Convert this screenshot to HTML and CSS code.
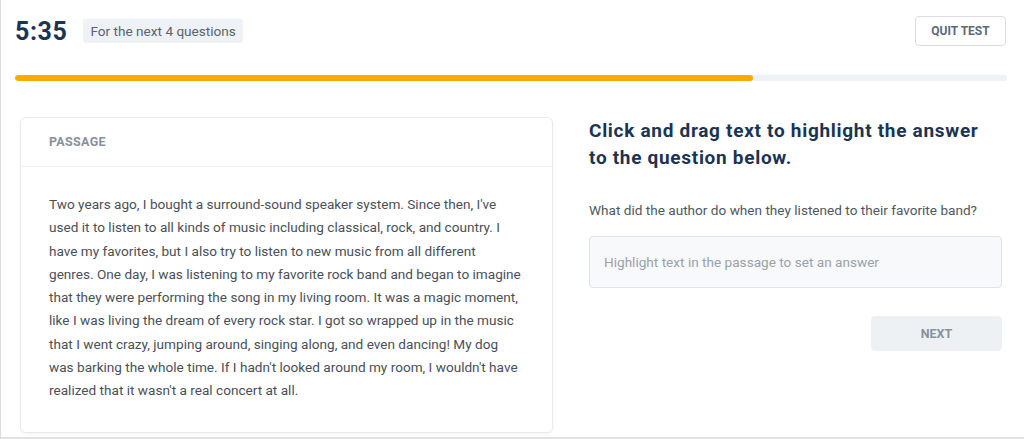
FILE: index.html
```html
<!DOCTYPE html>
<html>
<head>
<meta charset="utf-8">
<link rel="stylesheet" href="styles.css">
</head>
<body>
<div class="frame">
  <header class="topbar">
    <div class="timer-group">
      <span class="timer">5:35</span>
      <span class="badge">For the next 4 questions</span>
    </div>
    <button class="quit">QUIT TEST</button>
  </header>
  <div class="progress"><div class="progress-fill" style="width:74.4%"></div></div>
  <main class="content">
    <section class="card">
      <div class="card-head">PASSAGE</div>
      <div class="card-body">
        <p class="passage">Two years ago, I bought a surround-sound speaker system. Since then, I've<br>
used it to listen to all kinds of music including classical, rock, and country. I<br>
have my favorites, but I also try to listen to new music from all different<br>
genres. One day, I was listening to my favorite rock band and began to imagine<br>
that they were performing the song in my living room. It was a magic moment,<br>
like I was living the dream of every rock star. I got so wrapped up in the music<br>
that I went crazy, jumping around, singing along, and even dancing! My dog<br>
was barking the whole time. If I hadn't looked around my room, I wouldn't have<br>
realized that it wasn't a real concert at all.</p>
      </div>
    </section>
    <section class="question">
      <h1 class="prompt">Click and drag text to highlight the answer to the question below.</h1>
      <p class="qtext">What did the author do when they listened to their favorite band?</p>
      <div class="answer">Highlight text in the passage to set an answer</div>
      <div class="actions"><button class="next">NEXT</button></div>
    </section>
  </main>
</div>
</body>
</html>
```
FILE: styles.css
```css
html, body {
  margin: 0;
  padding: 0;
  background: #fff;
}
body {
  font-family: Roboto, "Noto Sans", sans-serif;
  color: #4a5058;
  width: 1024px;
  height: 439px;
  overflow: hidden;
}
.frame {
  box-sizing: border-box;
  height: 439px;
  border-left: 1px solid #dcdcdc;
  border-bottom: 2px solid #e2e2e2;
  padding: 0 17px 0 14px;
}
.topbar {
  display: flex;
  justify-content: space-between;
  align-items: center;
  padding-top: 16px;
  height: 30px;
}
.timer-group {
  display: flex;
  align-items: center;
  gap: 16px;
}
.timer {
  font-size: 25px;
  font-weight: 700;
  color: #1a3452;
  letter-spacing: 0.6px;
}
.badge {
  background: #eef2f6;
  border-radius: 3px;
  font-size: 13.6px;
  color: #5a636d;
  padding: 0 7px;
  height: 24px;
  line-height: 24px;
}
.quit {
  font-family: inherit;
  background: #fff;
  border: 1px solid #d9dde2;
  border-radius: 4px;
  font-size: 12px;
  font-weight: 700;
  color: #5d6a78;
  width: 91px;
  height: 30px;
  padding: 0;
  margin-right: 1px;
}
.progress {
  margin-top: 29px;
  height: 6px;
  border-radius: 3px;
  background: #eef1f5;
  overflow: hidden;
}
.progress-fill {
  height: 100%;
  background: #ffa800;
  border-radius: 3px;
}
.content {
  display: flex;
  gap: 36px;
  padding: 36px 5px 0 5px;
}
.card {
  width: 533px;
  box-sizing: border-box;
  border: 1px solid #e8eaed;
  border-radius: 6px;
  box-shadow: 0 1px 3px rgba(0,0,0,0.06);
  height: 316px;
}
.card-head {
  height: 48px;
  line-height: 48px;
  padding-left: 28px;
  border-bottom: 1px solid #eceef0;
  font-size: 12.5px;
  font-weight: 700;
  color: #88919a;
  letter-spacing: 0.3px;
}
.card-body {
  padding: 26px 10px 0 28px;
}
.passage {
  margin: 0;
  font-size: 13.6px;
  line-height: 23.3px;
  color: #4a5058;
  white-space: nowrap;
}
.question {
  flex: 1;
}
.prompt {
  margin: 0;
  font-size: 19px;
  line-height: 27px;
  font-weight: 700;
  color: #1a3452;
  letter-spacing: 0.7px;
  max-width: 400px;
}
.qtext {
  margin: 29px 0 0 0;
  font-size: 13.6px;
  line-height: 20px;
  color: #505860;
}
.answer {
  margin-top: 16px;
  box-sizing: border-box;
  height: 52px;
  border: 1px solid #dfe2e6;
  border-radius: 4px;
  background: #f8f9fa;
  font-size: 13.6px;
  color: #9aa1a8;
  padding-left: 14px;
  line-height: 50px;
}
.actions {
  display: flex;
  justify-content: flex-end;
  margin-top: 28px;
}
.next {
  font-family: inherit;
  width: 131px;
  height: 35px;
  border: none;
  border-radius: 4px;
  background: #eef1f4;
  font-size: 12.5px;
  font-weight: 700;
  color: #89929b;
}
```
